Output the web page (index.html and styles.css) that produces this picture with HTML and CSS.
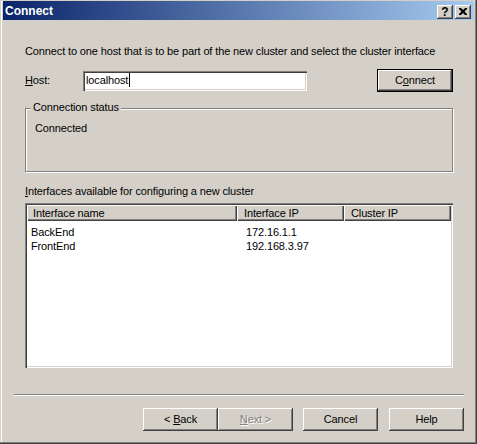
FILE: index.html
```html
<!DOCTYPE html>
<html>
<head>
<meta charset="utf-8">
<link rel="stylesheet" href="styles.css">
</head>
<body>
<div class="window">
  <div class="titlebar">
    <span class="title">Connect</span>
    <div class="tbtns">
      <span class="tbtn help">?</span>
      <span class="tbtn close"><svg width="8" height="7" viewBox="0 0 8 7"><path d="M0 0h2l2 2 2-2h2v1l-2.5 2.5L8 6v1H6L4 5 2 7H0V6l2.5-2.5L0 1z" fill="#000"/></svg></span>
    </div>
  </div>
  <div class="client">
    <div class="intro">Connect to one host that is to be part of the new cluster and select the cluster interface</div>
    <div class="host-row">
      <span class="host-label"><u>H</u>ost:</span>
      <div class="edit">localhost<span class="caret"></span></div>
      <div class="btn default"><span>C<u>o</u>nnect</span></div>
    </div>
    <div class="group">
      <span class="legend">Connection status</span>
      <div class="status">Connected</div>
    </div>
    <div class="list-label"><u>I</u>nterfaces available for configuring a new cluster</div>
    <div class="listview">
      <div class="lv-header">
        <div class="hcell c1">Interface name</div>
        <div class="hcell">Interface IP</div>
        <div class="hcell">Cluster IP</div>
      </div>
      <div class="lv-rows">
        <div class="lv-row"><span class="r1">BackEnd</span><span class="r2">172.16.1.1</span><span></span></div>
        <div class="lv-row"><span class="r1">FrontEnd</span><span class="r2">192.168.3.97</span><span></span></div>
      </div>
    </div>
  </div>
  <div class="separator"></div>
  <div class="buttons">
    <div class="btn"><span>&lt; <u>B</u>ack</span></div>
    <div class="btn disabled"><span><u>N</u>ext &gt;</span></div>
    <div class="btn gap1"><span>Cancel</span></div>
    <div class="btn gap2"><span>Help</span></div>
  </div>
</div>
</body>
</html>
```

FILE: styles.css
```css
html, body {
  margin: 0;
  padding: 0;
  background: #d4d0c8;
}
body {
  font-family: "Liberation Sans", Arial, sans-serif;
  font-size: 11px;
  line-height: 13px;
  letter-spacing: -0.13px;
  color: #000;
}
.window {
  width: 477px;
  height: 444px;
  box-sizing: border-box;
  background: #d4d0c8;
  padding: 1px 3px 3px 3px;
  display: flex;
  flex-direction: column;
  box-shadow: inset -1px -1px 0 #404040, inset -2px -2px 0 #808080, inset 1px 1px 0 #d4d0c8, inset 2px 2px 0 #fff;
}
.titlebar {
  height: 19px;
  flex: none;
  display: flex;
  align-items: flex-start;
  background: linear-gradient(to right, #0a246a, #a6caf0);
  padding: 0 3px 0 2px;
}
.title {
  color: #fff;
  font-weight: bold;
  font-size: 12px;
  line-height: 14px;
  letter-spacing: 0;
  margin-top: 3px;
}
.tbtns {
  margin-left: auto;
  margin-top: 4px;
  display: flex;
  gap: 2px;
}
.tbtn {
  width: 16px;
  height: 14px;
  box-sizing: border-box;
  background: #d4d0c8;
  box-shadow: inset -1px -1px 0 #404040, inset 1px 1px 0 #fff, inset -2px -2px 0 #808080;
  display: flex;
  align-items: center;
  justify-content: center;
}
.tbtn.help {
  font-weight: bold;
  font-size: 12px;
  line-height: 12px;
  letter-spacing: 0;
  padding-bottom: 1px;
}
.tbtn.close svg {
  display: block;
  margin-bottom: 1px;
}
.client {
  padding: 0 21px 0 22px;
  display: flex;
  flex-direction: column;
}
.intro {
  margin-top: 25px;
}
.host-row {
  margin-top: 11px;
  display: flex;
  align-items: center;
  height: 23px;
}
.host-label {
  width: 58px;
  flex: none;
}
.edit {
  width: 224px;
  height: 20px;
  box-sizing: border-box;
  background: #fff;
  box-shadow: inset 1px 1px 0 #808080, inset 2px 2px 0 #404040, inset -1px -1px 0 #fff, inset -2px -2px 0 #d4d0c8;
  padding: 3px 2px 0 3px;
  display: flex;
  align-items: flex-start;
}
.caret {
  width: 1px;
  height: 14px;
  background: #000;
  margin-left: 1px;
  margin-top: -1px;
}
.btn {
  width: 75px;
  height: 23px;
  box-sizing: border-box;
  background: #d4d0c8;
  box-shadow: inset -1px -1px 0 #404040, inset 1px 1px 0 #fff, inset -2px -2px 0 #808080;
  display: flex;
  align-items: center;
  justify-content: center;
  flex: none;
}
.btn.default {
  width: 76px;
  margin-left: auto;
  border: 1px solid #000;
}
.btn.disabled {
  color: #808080;
  text-shadow: 1px 1px 0 #fff;
}
.group {
  position: relative;
  margin-top: 16px;
  height: 64px;
  box-sizing: border-box;
  border: 1px solid #808080;
  box-shadow: inset 1px 1px 0 #fff, 1px 1px 0 #fff;
  padding: 13px 0 0 9px;
}
.legend {
  position: absolute;
  top: -8px;
  left: 5px;
  padding: 0 2px;
  background: #d4d0c8;
}
.list-label {
  margin-top: 13px;
}
.listview {
  margin-top: 5px;
  height: 165px;
  box-sizing: border-box;
  padding: 2px;
  background: #fff;
  box-shadow: inset 1px 1px 0 #808080, inset 2px 2px 0 #404040, inset -1px -1px 0 #fff, inset -2px -2px 0 #d4d0c8;
}
.lv-header {
  display: grid;
  grid-template-columns: 210px 107px 107px;
  height: 16px;
}
.hcell {
  background: #d4d0c8;
  box-shadow: inset 1px 1px 0 #fff, inset -1px -1px 0 #404040, inset -2px -2px 0 #808080;
  padding: 2px 0 0 7px;
  box-sizing: border-box;
  white-space: nowrap;
}
.hcell.c1 {
  padding-left: 6px;
}
.lv-rows {
  padding-top: 5px;
}
.lv-row {
  display: grid;
  grid-template-columns: 210px 107px 107px;
  height: 14px;
}
.r1 {
  padding-left: 4px;
}
.r2 {
  padding-left: 9px;
}
.separator {
  margin: 26px 10px 0 11px;
  border-top: 1px solid #808080;
  border-bottom: 1px solid #fff;
  height: 0;
}
.buttons {
  margin-top: 12px;
  display: flex;
  justify-content: flex-end;
  padding-right: 10px;
}
.btn.gap1 {
  margin-left: 10px;
}
.btn.gap2 {
  margin-left: 11px;
}
```
